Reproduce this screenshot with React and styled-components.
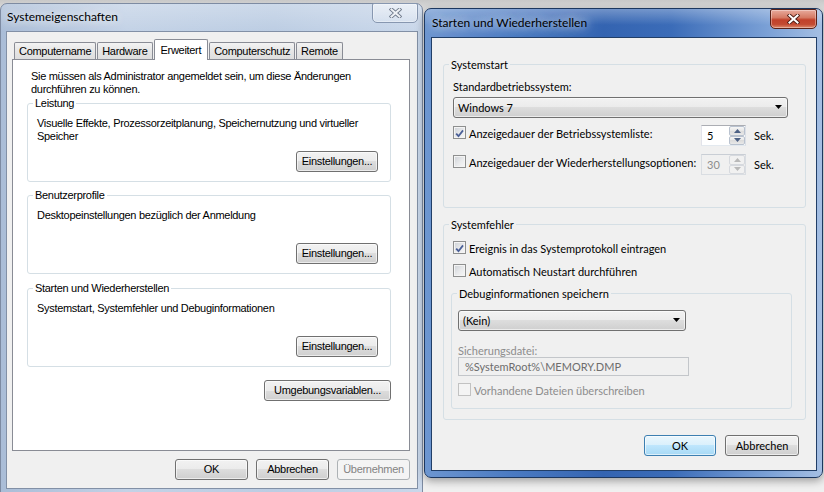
import React from "react";
import styled, { createGlobalStyle } from "styled-components";

const GlobalStyle = createGlobalStyle`
  html, body { margin: 0; padding: 0; }
  body {
    width: 824px;
    height: 492px;
    overflow: hidden;
    background: #efefef;
  }
`;

const Desktop = styled.div`
  display: flex;
  align-items: flex-start;
  width: 824px;
  height: 492px;
  overflow: hidden;
  background: linear-gradient(#c8c8c8 0, #dcdcdc 9px, #ececec 60px, #f0f0f0 100%);
`;

const WindowBase = styled.div`
  flex-shrink: 0;
  box-sizing: border-box;
  display: flex;
  flex-direction: column;
  color: #000;
`;

const InactiveWindow = styled(WindowBase)`
  width: 423px;
  height: 496px;
  margin-top: 3px;
  padding: 0 4px 0 5px;
  border: 1px solid #7d8ba2;
  border-radius: 7px 7px 0 0;
  background:
    linear-gradient(rgba(255, 255, 255, 0.25), rgba(255, 255, 255, 0) 28px),
    linear-gradient(90deg, #aabdd7 0%, #c3d2e6 30%, #bccde3 65%, #c9d7ea 100%);
  font-family: "Liberation Sans", Arial, sans-serif;
  font-size: 11px;
  letter-spacing: -0.3px;
`;

const ActiveWindow = styled(WindowBase)`
  width: 399px;
  height: 470px;
  margin: 8px 0 0 1px;
  padding: 0 5px 6px 6px;
  border: 1px solid #1c375f;
  border-radius: 7px;
  background:
    linear-gradient(rgba(255, 255, 255, 0.3), rgba(255, 255, 255, 0) 16px),
    linear-gradient(90deg, #6d96d0 0%, #4a7ac2 22%, #3464b1 45%, #3b6cb8 62%, #7aa0d6 86%, #a5bfe3 100%);
  box-shadow: 0 3px 9px rgba(0, 0, 0, 0.35);
  font-family: Lato, "Open Sans", sans-serif;
  font-size: 11px;
`;

const TitleBar = styled.div`
  flex-shrink: 0;
  display: flex;
  justify-content: space-between;
  align-items: flex-start;
  height: ${(p) => p.$h}px;
`;

const TitleText = styled.span`
  padding: ${(p) => p.$top}px 0 0 1px;
  font-family: Lato, "Open Sans", sans-serif;
  font-size: 12px;
  letter-spacing: 0;
  line-height: 14px;
  text-shadow: 0 0 8px rgba(255, 255, 255, 0.95), 0 0 14px rgba(255, 255, 255, 0.75);
`;

const CloseButton = styled.div`
  box-sizing: border-box;
  width: ${(p) => (p.$active ? 47 : 46)}px;
  height: 20px;
  margin-top: ${(p) => (p.$active ? 0 : -1)}px;
  display: flex;
  align-items: center;
  justify-content: center;
  border: 1px solid ${(p) => (p.$active ? "#5a2218" : "#8797b0")};
  border-radius: 2px 2px 5px 5px;
  background: ${(p) =>
    p.$active
      ? "linear-gradient(#e8aa9c 0%, #d57a64 42%, #c1412a 55%, #c34b32 80%, #de8c6e 100%)"
      : "linear-gradient(rgba(255,255,255,.5), rgba(255,255,255,.2))"};
  box-shadow: inset 0 0 0 1px rgba(255, 255, 255, 0.35);
`;

const CloseGlyph = ({ active }) => (
  <svg width="13" height="10" viewBox="0 0 13 10">
    <path
      d="M2.5 1.5 L10.5 8.5 M10.5 1.5 L2.5 8.5"
      stroke={active ? "#4a1a12" : "#6c7789"}
      strokeWidth="3.8"
      strokeLinecap="square"
    />
    <path
      d="M2.5 1.5 L10.5 8.5 M10.5 1.5 L2.5 8.5"
      stroke={active ? "#ffffff" : "#eef1f5"}
      strokeWidth="2.1"
      strokeLinecap="square"
    />
  </svg>
);

const Client = styled.div`
  box-sizing: border-box;
  display: flex;
  flex-direction: column;
  background: #f0f0f0;
  border: 1px solid ${(p) => (p.$active ? "#213e67" : "#8290a6")};
  padding: ${(p) => p.$pad};
  ${(p) => (p.$grow ? "flex: 1;" : "")}
`;

/* tabs */

const TabStrip = styled.div`
  display: flex;
  align-items: flex-end;
  gap: 1px;
  height: 21px;
  margin-bottom: -1px;
  padding-left: 2px;
`;

const Tab = styled.div`
  box-sizing: border-box;
  display: flex;
  align-items: center;
  height: ${(p) => (p.$selected ? 21 : 17)}px;
  margin-bottom: ${(p) => (p.$selected ? 0 : 1)}px;
  padding: 0 ${(p) => (p.$selected ? 6 : 4)}px ${(p) => (p.$selected ? 1 : 0)}px;
  border: 1px solid #898c95;
  border-bottom: none;
  border-radius: 2px 2px 0 0;
  background: ${(p) => (p.$selected ? "#fff" : "linear-gradient(#f3f3f3, #e6e6e6 50%, #dedede)")};
  position: relative;
  z-index: ${(p) => (p.$selected ? 1 : 0)};
  white-space: nowrap;
`;

const TabPanel = styled.div`
  box-sizing: border-box;
  display: flex;
  flex-direction: column;
  height: 392px;
  padding: 10px 18px 0 14px;
  border: 1px solid #898c95;
  background: #fff;
`;

const Intro = styled.div`
  padding-left: 4px;
  line-height: 13px;
`;

const Group = styled.fieldset`
  margin: ${(p) => p.$mt || 0}px 0 0;
  padding: 0;
  min-width: 0;
  border: 1px solid #d5dfe5;
  border-radius: 3px;
`;

const Legend = styled.legend`
  margin-left: 5px;
  padding: 0 2px;
  line-height: 13px;
`;

const InfoBody = styled.div`
  display: flex;
  flex-direction: column;
  height: 55px;
  padding: 7px 12px 9px 9px;
`;

const Desc = styled.div`
  line-height: 13px;
`;

const Button = styled.button`
  box-sizing: border-box;
  width: ${(p) => p.$w}px;
  height: 21px;
  padding: 0 4px;
  border: 1px solid ${(p) => (p.disabled ? "#adb2b5" : p.$default ? "#3c7fb1" : "#707070")};
  border-radius: 3px;
  background: ${(p) =>
    p.disabled
      ? "#f4f4f4"
      : p.$default
      ? "linear-gradient(#eaf6fd 0%, #d9f0fc 50%, #bee6fd 50%, #a7d9f5 100%)"
      : "linear-gradient(#f2f2f2 0%, #ebebeb 50%, #dddddd 50%, #cfcfcf 100%)"};
  box-shadow: inset 0 0 0 1px rgba(255, 255, 255, ${(p) => (p.disabled ? 0 : 0.6)});
  color: ${(p) => (p.disabled ? "#838383" : "#000")};
  font: inherit;
  letter-spacing: inherit;
  line-height: 19px;
  white-space: nowrap;
`;

const EndButton = styled(Button)`
  align-self: flex-end;
  margin-top: ${(p) => (p.$mt != null ? `${p.$mt}px` : "auto")};
`;

const ButtonRow = styled.div`
  display: flex;
  justify-content: flex-end;
  gap: ${(p) => p.$gap}px;
  margin-top: ${(p) => p.$mt}px;
  padding-right: ${(p) => p.$pr || 0}px;
`;

/* right dialog */

const StartBody = styled.div`
  display: flex;
  flex-direction: column;
  padding: 9px 17px 32px 9px;
`;

const ErrorBody = styled.div`
  display: flex;
  flex-direction: column;
  padding: 9px 13px 10px 7px;
`;

const DebugBody = styled.div`
  display: flex;
  flex-direction: column;
  align-items: flex-start;
  padding: 10px 6px 11px 6px;
`;

const Label = styled.div`
  margin-top: ${(p) => p.$mt || 0}px;
  line-height: 13px;
  color: ${(p) => (p.$disabled ? "#8d8d8d" : "#000")};
`;

const Combo = styled.div`
  box-sizing: border-box;
  display: flex;
  align-items: center;
  justify-content: space-between;
  width: ${(p) => (p.$w ? `${p.$w}px` : "auto")};
  height: 21px;
  margin-top: ${(p) => p.$mt || 0}px;
  padding: 0 4px 0 4px;
  border: 1px solid #707070;
  border-radius: 3px;
  background: linear-gradient(#f2f2f2 0%, #ebebeb 50%, #dddddd 50%, #cfcfcf 100%);
  box-shadow: inset 0 0 0 1px rgba(255, 255, 255, 0.6);
`;

const DropArrow = () => (
  <svg width="8" height="5" viewBox="0 0 8 5">
    <path d="M0 0 H7 L3.5 4 Z" fill="#000" />
  </svg>
);

const CheckList = styled.div`
  display: flex;
  flex-direction: column;
  gap: 8px;
  padding-left: 2px;
`;

const CheckLabel = styled.div`
  display: flex;
  align-items: center;
  gap: 3px;
  width: ${(p) => (p.$w ? `${p.$w}px` : "auto")};
  height: 15px;
  margin-top: ${(p) => p.$mt || 0}px;
  color: ${(p) => (p.$disabled ? "#8d8d8d" : "#000")};
  white-space: nowrap;
  span {
    padding-top: 1px;
  }
`;

const Box = styled.span`
  box-sizing: border-box;
  flex-shrink: 0;
  display: flex;
  align-items: center;
  justify-content: center;
  width: 13px;
  height: 13px;
  border: 1px solid ${(p) => (p.$disabled ? "#c2c2c2" : "#8e8f8f")};
  background: ${(p) =>
    p.$disabled ? "#f4f4f4" : "linear-gradient(135deg, #cdd1d6 0%, #e9eaec 55%, #f7f7f7 100%)"};
  box-shadow: inset 0 0 0 1px #f4f4f4;
`;

const Check = ({ checked, disabled }) => (
  <Box $disabled={disabled}>
    {checked && (
      <svg width="9" height="9" viewBox="0 0 9 9">
        <path d="M1.2 4.6 L3.5 7.2 L8 1.4" fill="none" stroke="#4a5f97" strokeWidth="1.8" />
      </svg>
    )}
  </Box>
);

const OptionRow = styled.div`
  display: flex;
  align-items: flex-start;
  height: 21px;
  margin-top: ${(p) => p.$mt}px;
`;

const Spin = styled.div`
  box-sizing: border-box;
  display: flex;
  width: 45px;
  height: 21px;
  border: 1px solid ${(p) => (p.$disabled ? "#c9ced5" : "#abadb3")};
  border-bottom-color: ${(p) => (p.$disabled ? "#d9dde2" : "#e3e9ef")};
  border-left-color: ${(p) => (p.$disabled ? "#d9dde2" : "#e2e3ea")};
  border-right-color: ${(p) => (p.$disabled ? "#d9dde2" : "#dbdfe6")};
  background: ${(p) => (p.$disabled ? "#f0f0f0" : "#fff")};
  color: ${(p) => (p.$disabled ? "#8d8d8d" : "#000")};
`;

const SpinValue = styled.span`
  flex: 1;
  padding-left: 5px;
  line-height: 19px;
`;

const SpinButtons = styled.div`
  display: flex;
  flex-direction: column;
  width: 16px;
`;

const SpinButton = styled.span`
  box-sizing: border-box;
  flex: 1;
  display: flex;
  align-items: center;
  justify-content: center;
  border: 1px solid ${(p) => (p.$disabled ? "#d6d9de" : "#b9c2cf")};
  border-radius: 2px;
  background: ${(p) =>
    p.$disabled ? "#f1f1f1" : "linear-gradient(#f6f6f6, #e6e6e6 50%, #dcdcdc 50%, #e9e9e9)"};
`;

const SpinArrow = ({ up, disabled }) => (
  <svg width="7" height="4" viewBox="0 0 7 4">
    <path d={up ? "M0 4 L3.5 0 L7 4 Z" : "M0 0 H7 L3.5 4 Z"} fill={disabled ? "#b9b9b9" : "#4d6185"} />
  </svg>
);

const Unit = styled.span`
  margin-left: 8px;
  line-height: 21px;
`;

const SpinBox = ({ value, disabled }) => (
  <Spin $disabled={disabled}>
    <SpinValue>{value}</SpinValue>
    <SpinButtons>
      <SpinButton $disabled={disabled}>
        <SpinArrow up disabled={disabled} />
      </SpinButton>
      <SpinButton $disabled={disabled}>
        <SpinArrow disabled={disabled} />
      </SpinButton>
    </SpinButtons>
  </Spin>
);

const FileBox = styled.div`
  box-sizing: border-box;
  width: 231px;
  height: 19px;
  padding-left: 6px;
  border: 1px solid #c3c6ca;
  background: #f0f0f0;
  color: #6d6d6d;
  line-height: 17px;
`;

const tabs = ["Computername", "Hardware", "Erweitert", "Computerschutz", "Remote"];

const sections = [
  {
    title: "Leistung",
    text: ["Visuelle Effekte, Prozessorzeitplanung, Speichernutzung und virtueller", "Speicher"],
    mt: 1,
  },
  { title: "Benutzerprofile", text: ["Desktopeinstellungen bezüglich der Anmeldung"], mt: 7 },
  {
    title: "Starten und Wiederherstellen",
    text: ["Systemstart, Systemfehler und Debuginformationen"],
    mt: 8,
  },
];

export default function App() {
  return (
    <>
      <GlobalStyle />
      <Desktop>
        <InactiveWindow>
          <TitleBar $h={27}>
            <TitleText $top={6}>Systemeigenschaften</TitleText>
            <CloseButton>
              <CloseGlyph />
            </CloseButton>
          </TitleBar>
          <Client $pad="7px 7px 8px 5px">
            <TabStrip>
              {tabs.map((t) => (
                <Tab key={t} $selected={t === "Erweitert"}>
                  {t}
                </Tab>
              ))}
            </TabStrip>
            <TabPanel>
              <Intro>
                Sie müssen als Administrator angemeldet sein, um diese Änderungen
                <br />
                durchführen zu können.
              </Intro>
              {sections.map((s) => (
                <Group key={s.title} $mt={s.mt}>
                  <Legend>{s.title}</Legend>
                  <InfoBody>
                    {s.text.map((line) => (
                      <Desc key={line}>{line}</Desc>
                    ))}
                    <EndButton $w={82}>Einstellungen...</EndButton>
                  </InfoBody>
                </Group>
              ))}
              <EndButton $w={127} $mt={13}>
                Umgebungsvariablen...
              </EndButton>
            </TabPanel>
            <ButtonRow $gap={8} $mt={8}>
              <Button $w={73}>OK</Button>
              <Button $w={73}>Abbrechen</Button>
              <Button $w={73} disabled>
                Übernehmen
              </Button>
            </ButtonRow>
          </Client>
        </InactiveWindow>

        <ActiveWindow>
          <TitleBar $h={28}>
            <TitleText $top={7}>Starten und Wiederherstellen</TitleText>
            <CloseButton $active>
              <CloseGlyph active />
            </CloseButton>
          </TitleBar>
          <Client $active $grow $pad="20px 10px 0 11px">
            <Group>
              <Legend>Systemstart</Legend>
              <StartBody>
                <Label>Standardbetriebssystem:</Label>
                <Combo $mt={4}>
                  <span>Windows 7</span>
                  <DropArrow />
                </Combo>
                <OptionRow $mt={7}>
                  <CheckLabel $w={248}>
                    <Check checked />
                    <span>Anzeigedauer der Betriebssystemliste:</span>
                  </CheckLabel>
                  <SpinBox value="5" />
                  <Unit>Sek.</Unit>
                </OptionRow>
                <OptionRow $mt={8}>
                  <CheckLabel $w={248}>
                    <Check />
                    <span>Anzeigedauer der Wiederherstellungsoptionen:</span>
                  </CheckLabel>
                  <SpinBox value="30" disabled />
                  <Unit>Sek.</Unit>
                </OptionRow>
              </StartBody>
            </Group>

            <Group $mt={10}>
              <Legend>Systemfehler</Legend>
              <ErrorBody>
                <CheckList>
                  <CheckLabel>
                    <Check checked />
                    <span>Ereignis in das Systemprotokoll eintragen</span>
                  </CheckLabel>
                  <CheckLabel>
                    <Check />
                    <span>Automatisch Neustart durchführen</span>
                  </CheckLabel>
                </CheckList>
                <Group $mt={9}>
                  <Legend>Debuginformationen speichern</Legend>
                  <DebugBody>
                    <Combo $w={228}>
                      <span>(Kein)</span>
                      <DropArrow />
                    </Combo>
                    <Label $disabled $mt={13}>
                      Sicherungsdatei:
                    </Label>
                    <FileBox>{"%SystemRoot%\\MEMORY.DMP"}</FileBox>
                    <CheckLabel $disabled $mt={6}>
                      <Check disabled />
                      <span>Vorhandene Dateien überschreiben</span>
                    </CheckLabel>
                  </DebugBody>
                </Group>
              </ErrorBody>
            </Group>

            <ButtonRow $gap={9} $mt={15} $pr={7}>
              <Button $w={72} $default>
                OK
              </Button>
              <Button $w={74}>Abbrechen</Button>
            </ButtonRow>
          </Client>
        </ActiveWindow>
      </Desktop>
    </>
  );
}
